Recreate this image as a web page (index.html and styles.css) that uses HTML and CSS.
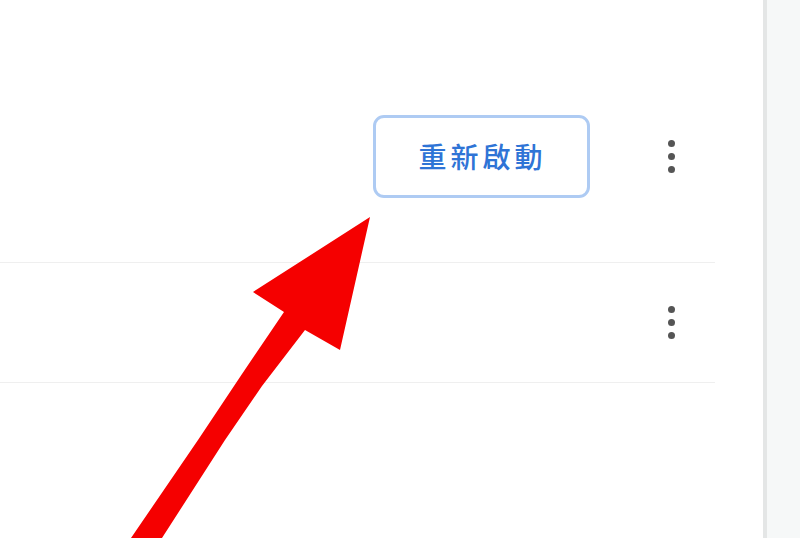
FILE: index.html
```html
<!DOCTYPE html>
<html lang="zh-Hant">
<head>
    <meta charset="UTF-8">
    <meta name="viewport" content="width=device-width, initial-scale=1.0">
    <title>重新啟動</title>
    <link rel="stylesheet" href="styles.css">
</head>
<body>
    <div class="page">
        <div class="main">
            <div class="list">
                <div class="row row-first">
                    <button class="restart-btn">重新啟動</button>
                    <button class="menu-btn" aria-label="更多">
                        <span class="dot"></span>
                        <span class="dot"></span>
                        <span class="dot"></span>
                    </button>
                </div>
                <div class="row row-second">
                    <button class="menu-btn" aria-label="更多">
                        <span class="dot"></span>
                        <span class="dot"></span>
                        <span class="dot"></span>
                    </button>
                </div>
            </div>
        </div>
        <div class="side"></div>

        <!-- annotation arrow drawn over the screenshot -->
        <svg class="arrow" width="800" height="538" viewBox="0 0 800 538">
            <polygon points="370,217 340,350 305,330 262,386 225,440 162,538 131,538 198,440 242,374 284,312 253,292" fill="#f50000"/>
        </svg>
    </div>
</body>
</html>
```

FILE: styles.css
```css
body{
    margin: 0;
    font-family: "Noto Sans CJK TC", "Noto Sans", sans-serif;
    background: #fff;
}

.page{
    position: relative;
    display: flex;
    width: 800px;
    height: 538px;
    overflow: hidden;
}

.main{
    width: 763px;
}

.list{
    width: 715px;
}

.row{
    display: flex;
    justify-content: flex-end;
    border-bottom: 1px solid #efefef;
}

.row-first{
    height: 263px;
    box-sizing: border-box;
    align-items: flex-start;
    padding-top: 115px;
}

.row-first .menu-btn{
    margin-top: 25px;
}

.row-second{
    height: 119px;
    align-items: center;
}

.restart-btn{
    width: 217px;
    height: 83px;
    margin-right: 61px;
    padding: 0 0 2px 2px;
    border: 3px solid #aecbf3;
    border-radius: 11px;
    background: #fff;
    color: #2f74d6;
    font-family: "Noto Sans CJK TC", sans-serif;
    font-size: 28px;
    font-weight: 500;
    letter-spacing: 4px;
}

.menu-btn{
    display: flex;
    flex-direction: column;
    align-items: center;
    gap: 6px;
    width: 40px;
    padding: 0;
    margin-right: 24px;
    border: none;
    background: none;
}

.dot{
    width: 7px;
    height: 7px;
    border-radius: 50%;
    background: #555;
}

.side{
    flex: 1;
    background: #f6f8f8;
    border-left: 4px solid #e4e6e6;
}

.arrow{
    position: absolute;
    left: 0;
    top: 0;
}
```
